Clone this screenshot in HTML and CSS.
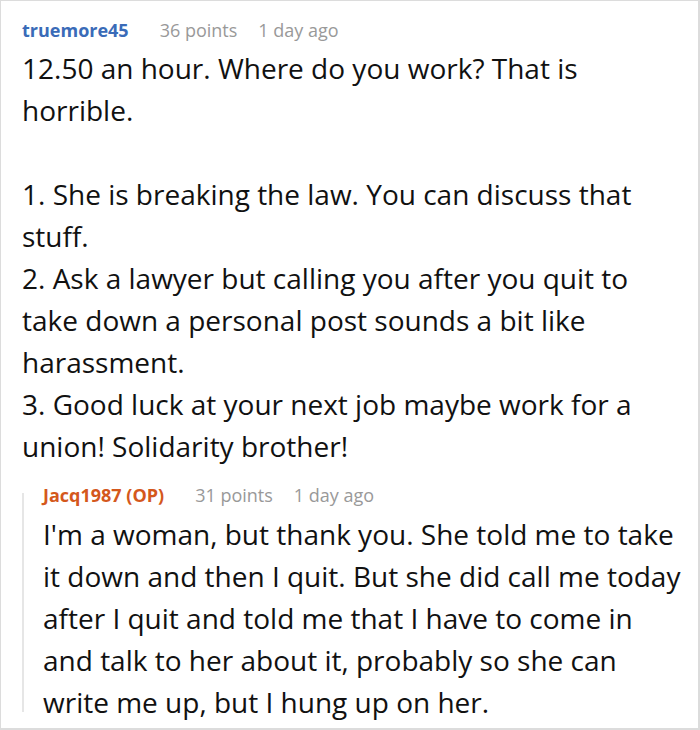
FILE: index.html
```html
<!DOCTYPE html>
<html>
<head>
<meta charset="utf-8">
<link rel="stylesheet" href="styles.css">
</head>
<body>
<div class="thread">
  <div class="comment">
    <div class="meta">
      <span class="user">truemore45</span>
      <span class="info">36 points</span>
      <span class="info">1 day ago</span>
    </div>
    <div class="body">12.50 an hour. Where do you work? That is horrible.<br><br>1. She is breaking the law. You can discuss that stuff.<br>2. Ask a lawyer but calling you after you quit to take down a personal post sounds a bit like harassment.<br>3. Good luck at your next job maybe work for a union! Solidarity brother!</div>
    <div class="reply">
      <div class="meta">
        <span class="user op">Jacq1987 (OP)</span>
        <span class="info">31 points</span>
        <span class="info">1 day ago</span>
      </div>
      <div class="body">I'm a woman, but thank you. She told me to take it down and then I quit. But she did call me today after I quit and told me that I have to come in and talk to her about it, probably so she can write me up, but I hung up on her.</div>
    </div>
  </div>
</div>
</body>
</html>
```
FILE: styles.css
```css
html, body {
  margin: 0;
  padding: 0;
  background: #fff;
}
.thread {
  box-sizing: border-box;
  width: 700px;
  height: 730px;
  border: 1px solid #dcdcdc;
  border-width: 1px 2px 2px 1px;
  overflow: hidden;
  font-family: "Open Sans", "Noto Sans", sans-serif;
}
.comment {
  padding: 16px 14px 0 21px;
}
.meta {
  display: flex;
  gap: 21px;
  font-size: 18px;
  line-height: 26px;
  margin-bottom: 4px;
}
.user {
  font-weight: 700;
  color: #3a6bb8;
  margin-right: 10px;
}
.user.op {
  color: #d4581c;
}
.info {
  color: #999;
}
.body {
  font-size: 28px;
  line-height: 42px;
  color: #111;
}
.reply {
  position: relative;
  margin-top: 15px;
  padding-left: 21px;
}
.reply::before {
  content: "";
  position: absolute;
  left: 0;
  top: 11px;
  bottom: 11px;
  width: 2px;
  background: #e6e6e6;
}
.reply .meta {
  margin-bottom: 5px;
}
```
